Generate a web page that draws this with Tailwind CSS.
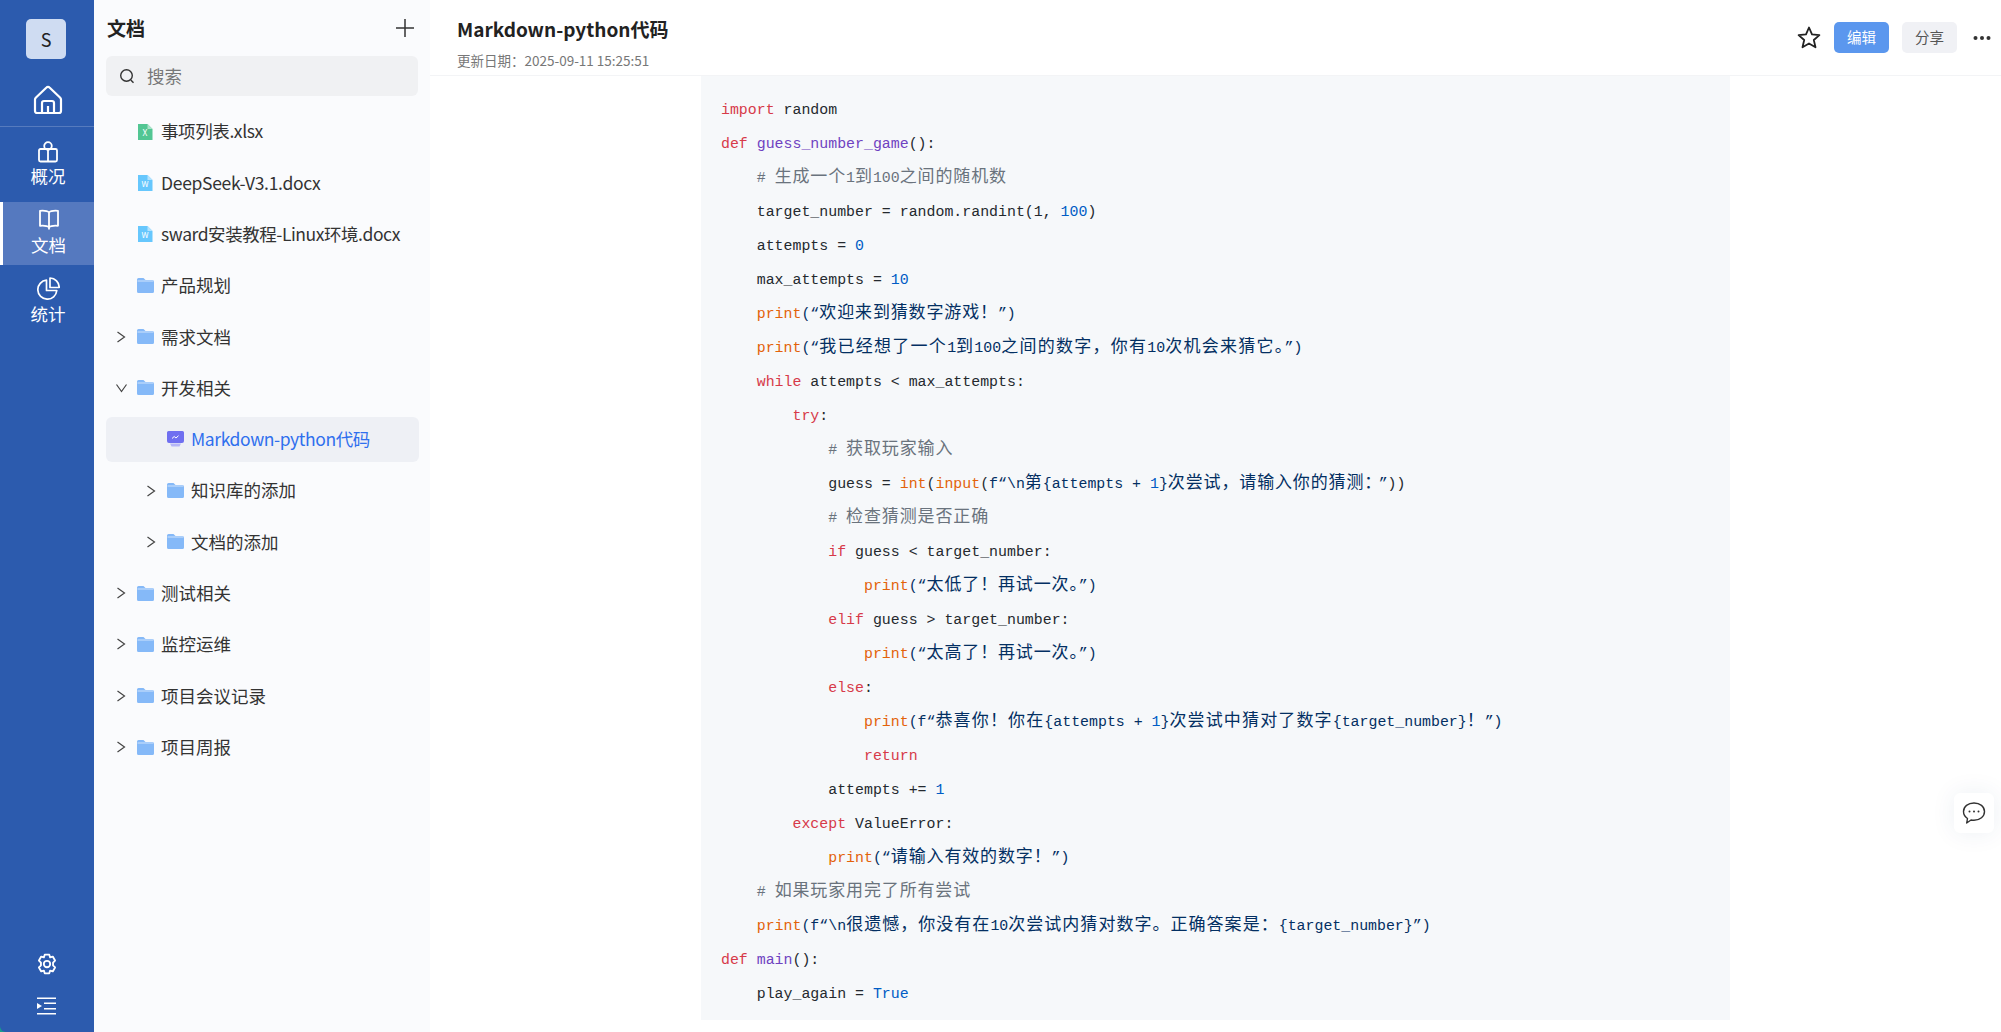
<!DOCTYPE html>
<html lang="zh-CN">
<head>
  <meta charset="UTF-8" />
  <title>Markdown-python代码</title>
  <script src="https://cdn.jsdelivr.net/npm/@tailwindcss/browser@4"></script>
</head>
<body class="h-screen overflow-hidden bg-white font-['Noto_Sans_CJK_SC','Noto_Sans',sans-serif] text-[#333]">
  <div class="flex h-[1032px] bg-[#179c8e]">
    <!-- nav -->
    <nav class="flex w-[94px] shrink-0 flex-col rounded-bl-[6px] bg-[#2c5bae] text-[17.5px] text-white">
      <div class="flex h-[127px] flex-col items-center border-b border-white/20 pt-[19px]">
        <div class="mr-[2px] flex h-10 w-10 items-center justify-center rounded-[5px] bg-[#cfdcf2] text-[18px] text-[#222]">S</div>
        <svg class="mt-[26px] ml-[2px]" width="30" height="30" viewBox="0 0 30 30" fill="none" stroke="white" stroke-width="2.2" stroke-linejoin="round"><path d="M3 12.5 13.5 2.5a2 2 0 0 1 3 0L27 12.5c.6.6 1 1.2 1 2V26a2 2 0 0 1-2 2H4a2 2 0 0 1-2-2V14.500c0-.8.400-1.400 1-2Z"/><path d="M9 28V18a2 2 0 0 1 2-2h8a2 2 0 0 1 2 2v10M15 21v7"/></svg>
      </div>
      <a class="flex h-[75px] flex-col items-center pt-[14px] pl-[2px] leading-[24px]">
        <svg width="22" height="22" viewBox="0 0 22 22" fill="none" stroke="white" stroke-width="1.800" stroke-linejoin="round"><rect x="2" y="8" width="18" height="12.500" rx="1.500"/><circle cx="11" cy="5" r="3.800"/><path d="M11 8.500v12"/></svg>
        <span class="mt-[1px]">概况</span>
      </a>
      <a class="flex h-[63px] flex-col items-center border-l-[3px] border-white bg-[#5579bf] pt-[6px] leading-[24px]">
        <svg width="22" height="22" viewBox="0 0 22 22" fill="none" stroke="white" stroke-width="1.800" stroke-linejoin="round"><path d="M11 4.500C9.500 2.800 6 2.500 2 2.800v15c4-.3 7.500 0 9 1.700 1.500-1.700 5-2 9-1.700v-15c-4-.3-7.500 0-9 1.700ZM11 4.500v17"/></svg>
        <span class="mt-[3px]">文档</span>
      </a>
      <a class="flex h-[76px] flex-col items-center pt-[12px] pl-[2px] leading-[24px]">
        <svg width="23" height="23" viewBox="0 0 23 23" fill="none" stroke="white" stroke-width="1.700" stroke-linejoin="round"><path d="M9.500 3.200a9.500 9.500 0 1 0 10.300 10.300H9.500Z"/><path d="M13 1v9.500h9.200A9.500 9.500 0 0 0 13 1Z"/></svg>
        <span class="mt-[2px]">统计</span>
      </a>
      <div class="mt-auto flex flex-col items-center pb-[17px]">
        <svg width="22" height="22" viewBox="0 0 24 24" fill="none" stroke="white" stroke-width="2" stroke-linejoin="round"><circle cx="12" cy="12" r="3.500"/><path d="M9.500 1.800h5l.9 3 2.900-.9 2.500 4.300-2.200 2.300v3l2.200 2.300-2.500 4.300-2.900-.9-.9 3h-5l-.9-3-2.900.9-2.500-4.300 2.200-2.300v-3L3.200 8.200l2.500-4.300 2.900.9Z"/></svg>
        <svg class="mt-[22px]" width="20" height="18" viewBox="0 0 20 18" fill="white"><rect y="0.500" width="19" height="1.500"/><rect x="7" y="5.500" width="12" height="1.500"/><rect x="7" y="11" width="12" height="1.500"/><rect y="16" width="19" height="1.500"/><path d="M0 6 5 9 0 12Z"/></svg>
      </div>
    </nav>

    <!-- doc tree -->
    <aside class="w-[336px] shrink-0 bg-[#fafbfd] px-3 text-[17.5px]">
      <div class="flex h-[56px] items-center justify-between pl-[1px] pr-[3px]">
        <h2 class="text-[19px] font-bold text-[#222]">文档</h2>
        <svg width="20" height="20" viewBox="0 0 20 20" stroke="#333" stroke-width="1.500"><path d="M10 1v18M1 10h18"/></svg>
      </div>
      <div class="flex h-10 items-center rounded-[6px] bg-[#f0f1f3] pl-[13px] text-[#777]">
        <svg width="16" height="16" viewBox="0 0 16 16" fill="none" stroke="#333" stroke-width="1.400"><circle cx="7.500" cy="7.500" r="5.800"/><path d="m11.800 12 2.700 2.700"/></svg>
        <span class="ml-[12px]">搜索</span>
      </div>
      <ul class="mt-[13px] flex w-[313px] flex-col gap-[6.300px] [&>li]:flex [&>li]:h-[45px] [&>li]:items-center [&>li]:rounded-[6px] [&>li]:pl-[10px]">
        <li>
          <span class="w-[21px]"></span>
          <svg class="mr-[8px]" width="16" height="16" viewBox="0 0 16 16"><path d="M1 0h9.500L15.500 5v11H1Z" fill="#52c693"/><path d="M10.500 0v5h5Z" fill="#a9e3c9"/><text x="8" y="12" font-size="8.500" fill="#fff" text-anchor="middle">X</text></svg>
          <span class="tracking-[-0.4px]">事项列表.xlsx</span>
        </li>
        <li>
          <span class="w-[21px]"></span>
          <svg class="mr-[8px]" width="16" height="16" viewBox="0 0 16 16"><path d="M1 0h9.500L15.500 5v11H1Z" fill="#66c7fd"/><path d="M10.500 0v5h5Z" fill="#b3e3fe"/><text x="8" y="12" font-size="8" fill="#fff" text-anchor="middle">W</text></svg>
          <span class="tracking-[-0.3px]">DeepSeek-V3.1.docx</span>
        </li>
        <li>
          <span class="w-[21px]"></span>
          <svg class="mr-[8px]" width="16" height="16" viewBox="0 0 16 16"><path d="M1 0h9.500L15.500 5v11H1Z" fill="#66c7fd"/><path d="M10.500 0v5h5Z" fill="#b3e3fe"/><text x="8" y="12" font-size="8" fill="#fff" text-anchor="middle">W</text></svg>
          <span class="tracking-[-0.45px]">sward安装教程-Linux环境.docx</span>
        </li>
        <li>
          <span class="w-[21px]"></span>
          <svg class="mr-[7px]" width="17" height="15" viewBox="0 0 17 15"><path d="M1.500 0H6.500L8.500 2H15.500A1.500 1.500 0 0 1 17 3.500V13.500A1.500 1.500 0 0 1 15.500 15H1.500A1.500 1.500 0 0 1 0 13.500V1.500A1.500 1.500 0 0 1 1.500 0Z" fill="#85b9f8"/><path d="M.5 2.500H16.500V3.500H.5Z" fill="#cfe3fc"/></svg>
          <span>产品规划</span>
        </li>
        <li>
          <svg class="mr-[11px]" width="10" height="12" viewBox="0 0 10 12" fill="none" stroke="#444" stroke-width="1.200"><path d="m1.500 1 7 5-7 5"/></svg>
          <svg class="mr-[7px]" width="17" height="15" viewBox="0 0 17 15"><path d="M1.500 0H6.500L8.500 2H15.500A1.500 1.500 0 0 1 17 3.500V13.500A1.500 1.500 0 0 1 15.500 15H1.500A1.500 1.500 0 0 1 0 13.500V1.500A1.500 1.500 0 0 1 1.500 0Z" fill="#85b9f8"/><path d="M.5 2.500H16.500V3.500H.5Z" fill="#cfe3fc"/></svg>
          <span>需求文档</span>
        </li>
        <li>
          <svg class="mr-[10px]" width="11" height="10" viewBox="0 0 11 10" fill="none" stroke="#444" stroke-width="1.200"><path d="m.5 1.500 5 7 5-7"/></svg>
          <svg class="mr-[7px]" width="17" height="15" viewBox="0 0 17 15"><path d="M1.500 0H6.500L8.500 2H15.500A1.500 1.500 0 0 1 17 3.500V13.500A1.500 1.500 0 0 1 15.500 15H1.500A1.500 1.500 0 0 1 0 13.500V1.500A1.500 1.500 0 0 1 1.500 0Z" fill="#85b9f8"/><path d="M.5 2.500H16.500V3.500H.5Z" fill="#cfe3fc"/></svg>
          <span>开发相关</span>
        </li>
        <li class="bg-[#eef0f5] !pl-[40px] text-[#2f6fee]">
          <span class="w-[21px]"></span>
          <svg class="mr-[7px]" width="17" height="16" viewBox="0 0 17 16"><path d="M1.500 0H15.500A1.500 1.500 0 0 1 17 1.500V10A2 2 0 0 1 15 12H2A2 2 0 0 1 0 10V1.500A1.500 1.500 0 0 1 1.500 0Z" fill="#6f6ff0"/><path d="M3 12.500H14L12.500 15.500H4.500Z" fill="#b5b6f7"/><path d="m5 7.500 2.200-2 1.800 1.500 2.500-2.300" fill="none" stroke="#fff" stroke-width="1"/></svg>
          <span class="tracking-[-0.4px]">Markdown-python代码</span>
        </li>
        <li class="!pl-[40px]">
          <svg class="mr-[11px]" width="10" height="12" viewBox="0 0 10 12" fill="none" stroke="#444" stroke-width="1.200"><path d="m1.500 1 7 5-7 5"/></svg>
          <svg class="mr-[7px]" width="17" height="15" viewBox="0 0 17 15"><path d="M1.500 0H6.500L8.500 2H15.500A1.500 1.500 0 0 1 17 3.500V13.500A1.500 1.500 0 0 1 15.500 15H1.500A1.500 1.500 0 0 1 0 13.500V1.500A1.500 1.500 0 0 1 1.500 0Z" fill="#85b9f8"/><path d="M.5 2.500H16.500V3.500H.5Z" fill="#cfe3fc"/></svg>
          <span>知识库的添加</span>
        </li>
        <li class="!pl-[40px]">
          <svg class="mr-[11px]" width="10" height="12" viewBox="0 0 10 12" fill="none" stroke="#444" stroke-width="1.200"><path d="m1.500 1 7 5-7 5"/></svg>
          <svg class="mr-[7px]" width="17" height="15" viewBox="0 0 17 15"><path d="M1.500 0H6.500L8.500 2H15.500A1.500 1.500 0 0 1 17 3.500V13.500A1.500 1.500 0 0 1 15.500 15H1.500A1.500 1.500 0 0 1 0 13.500V1.500A1.500 1.500 0 0 1 1.500 0Z" fill="#85b9f8"/><path d="M.5 2.500H16.500V3.500H.5Z" fill="#cfe3fc"/></svg>
          <span>文档的添加</span>
        </li>
        <li>
          <svg class="mr-[11px]" width="10" height="12" viewBox="0 0 10 12" fill="none" stroke="#444" stroke-width="1.200"><path d="m1.500 1 7 5-7 5"/></svg>
          <svg class="mr-[7px]" width="17" height="15" viewBox="0 0 17 15"><path d="M1.500 0H6.500L8.500 2H15.500A1.500 1.500 0 0 1 17 3.500V13.500A1.500 1.500 0 0 1 15.500 15H1.500A1.500 1.500 0 0 1 0 13.500V1.500A1.500 1.500 0 0 1 1.500 0Z" fill="#85b9f8"/><path d="M.5 2.500H16.500V3.500H.5Z" fill="#cfe3fc"/></svg>
          <span>测试相关</span>
        </li>
        <li>
          <svg class="mr-[11px]" width="10" height="12" viewBox="0 0 10 12" fill="none" stroke="#444" stroke-width="1.200"><path d="m1.500 1 7 5-7 5"/></svg>
          <svg class="mr-[7px]" width="17" height="15" viewBox="0 0 17 15"><path d="M1.500 0H6.500L8.500 2H15.500A1.500 1.500 0 0 1 17 3.500V13.500A1.500 1.500 0 0 1 15.500 15H1.500A1.500 1.500 0 0 1 0 13.500V1.500A1.500 1.500 0 0 1 1.500 0Z" fill="#85b9f8"/><path d="M.5 2.500H16.500V3.500H.5Z" fill="#cfe3fc"/></svg>
          <span>监控运维</span>
        </li>
        <li>
          <svg class="mr-[11px]" width="10" height="12" viewBox="0 0 10 12" fill="none" stroke="#444" stroke-width="1.200"><path d="m1.500 1 7 5-7 5"/></svg>
          <svg class="mr-[7px]" width="17" height="15" viewBox="0 0 17 15"><path d="M1.500 0H6.500L8.500 2H15.500A1.500 1.500 0 0 1 17 3.500V13.500A1.500 1.500 0 0 1 15.500 15H1.500A1.500 1.500 0 0 1 0 13.500V1.500A1.500 1.500 0 0 1 1.500 0Z" fill="#85b9f8"/><path d="M.5 2.500H16.500V3.500H.5Z" fill="#cfe3fc"/></svg>
          <span>项目会议记录</span>
        </li>
        <li>
          <svg class="mr-[11px]" width="10" height="12" viewBox="0 0 10 12" fill="none" stroke="#444" stroke-width="1.200"><path d="m1.500 1 7 5-7 5"/></svg>
          <svg class="mr-[7px]" width="17" height="15" viewBox="0 0 17 15"><path d="M1.500 0H6.500L8.500 2H15.500A1.500 1.500 0 0 1 17 3.500V13.500A1.500 1.500 0 0 1 15.500 15H1.500A1.500 1.500 0 0 1 0 13.500V1.500A1.500 1.500 0 0 1 1.500 0Z" fill="#85b9f8"/><path d="M.5 2.500H16.500V3.500H.5Z" fill="#cfe3fc"/></svg>
          <span>项目周报</span>
        </li>
      </ul>
    </aside>

    <!-- main -->
    <main class="relative flex min-w-0 flex-1 flex-col bg-white">
      <header class="flex h-[76px] shrink-0 items-center justify-between border-b border-[#f3f4f6] pl-[27px] pr-[10px]">
        <div class="pt-[8px]">
          <h1 class="text-[19px] leading-[28px] font-semibold text-[#222]">Markdown-python代码</h1>
          <p class="mt-[8px] text-[13.500px] leading-[18px] text-[#777]">更新日期：2025-09-11 15:25:51</p>
        </div>
        <div class="flex items-center">
          <svg width="24" height="23" viewBox="0 0 24 23" fill="none" stroke="#222" stroke-width="1.800" stroke-linejoin="round"><path d="M12 1.500 15 8.400l7.400.7-5.600 4.900 1.700 7.300L12 17.500l-6.500 3.800 1.700-7.300L1.600 9.100 9 8.400Z"/></svg>
          <button class="ml-[13px] h-[31px] w-[55px] rounded-[5px] bg-[#5b97ee] pb-[2px] text-[14.500px] text-white">编辑</button>
          <button class="ml-[13px] h-[31px] w-[55px] rounded-[5px] bg-[#f0f1f5] pb-[2px] text-[14.500px] text-[#555]">分享</button>
          <svg class="ml-[16px]" width="18" height="6" viewBox="0 0 18 6" fill="#333"><circle cx="2.500" cy="3" r="2"/><circle cx="9" cy="3" r="2"/><circle cx="15.500" cy="3" r="2"/></svg>
        </div>
      </header>

      <div class="ml-[271px] h-[944px] w-[1029px] bg-[#f6f8fa] pt-[17px] pl-[20px] font-['Liberation_Mono','Noto_Sans_CJK_SC',monospace] text-[14.900px] text-[#24292e] [&_i]:text-[17px] [&_i]:tracking-[0.860px] [&_i]:not-italic [&>div]:h-[34px] [&>div]:leading-[34px] [&>div]:whitespace-pre">
<div><span class="text-[#d73a49]">import</span> random</div>
<div><span class="text-[#d73a49]">def</span> <span class="text-[#6f42c1]">guess_number_game</span>():</div>
<div class="text-[#6a737d]">    # <i>生成一个</i>1<i>到</i>100<i>之间的随机数</i></div>
<div>    target_number = random.randint(1, <span class="text-[#005cc5]">100</span>)</div>
<div>    attempts = <span class="text-[#005cc5]">0</span></div>
<div>    max_attempts = <span class="text-[#005cc5]">10</span></div>
<div>    <span class="text-[#e36209]">print</span><span class="text-[#032f62]">(“<i>欢迎来到猜数字游戏！</i>”)</span></div>
<div>    <span class="text-[#e36209]">print</span><span class="text-[#032f62]">(“<i class="!tracking-[1.260px]">我已经想了一个</i>1<i class="!tracking-[1.260px]">到</i>100<i class="!tracking-[1.260px]">之间的数字，你有</i>10<i class="!tracking-[1.260px]">次机会来猜它。</i>”)</span></div>
<div>    <span class="text-[#d73a49]">while</span> attempts &lt; max_attempts:</div>
<div>        <span class="text-[#d73a49]">try</span>:</div>
<div class="text-[#6a737d]">            # <i>获取玩家输入</i></div>
<div>            guess = <span class="text-[#e36209]">int</span>(<span class="text-[#e36209]">input</span>(<span class="text-[#032f62]">f“\n<i>第</i>{attempts + <span class="text-[#005cc5]">1</span>}<i class="mr-[5px]">次尝试，请输入你的猜测：</i>”</span>))</div>
<div class="text-[#6a737d]">            # <i>检查猜测是否正确</i></div>
<div>            <span class="text-[#d73a49]">if</span> guess &lt; target_number:</div>
<div>                <span class="text-[#e36209]">print</span><span class="text-[#032f62]">(“<i>太低了！再试一次。</i>”)</span></div>
<div>            <span class="text-[#d73a49]">elif</span> guess &gt; target_number:</div>
<div>                <span class="text-[#e36209]">print</span><span class="text-[#032f62]">(“<i>太高了！再试一次。</i>”)</span></div>
<div>            <span class="text-[#d73a49]">else</span>:</div>
<div>                <span class="text-[#e36209]">print</span><span class="text-[#032f62]">(f“<i class="!tracking-[1.140px]">恭喜你！你在</i>{attempts + <span class="text-[#005cc5]">1</span>}<i class="!tracking-[1.140px]">次尝试中猜对了数字</i>{target_number}<i>！</i>”)</span></div>
<div>                <span class="text-[#d73a49]">return</span></div>
<div>            attempts += <span class="text-[#005cc5]">1</span></div>
<div>        <span class="text-[#d73a49]">except</span> ValueError:</div>
<div>            <span class="text-[#e36209]">print</span><span class="text-[#032f62]">(“<i>请输入有效的数字！</i>”)</span></div>
<div class="text-[#6a737d]">    # <i>如果玩家用完了所有尝试</i></div>
<div>    <span class="text-[#e36209]">print</span><span class="text-[#032f62]">(f“\n<i class="!tracking-[1.030px]">很遗憾，你没有在</i>10<i class="!tracking-[1.030px]">次尝试内猜对数字。正确答案是：</i>{target_number}”)</span></div>
<div><span class="text-[#d73a49]">def</span> <span class="text-[#6f42c1]">main</span>():</div>
<div>    play_again = <span class="text-[#005cc5]">True</span></div>
      </div>

      <button class="absolute top-[793px] right-[7px] flex h-10 w-10 items-center justify-center rounded-[6px] bg-white shadow-[0_0_24px_rgba(30,60,120,0.08)]">
        <svg width="24" height="24" viewBox="0 0 24 24" fill="none" stroke="#333" stroke-width="1.400" stroke-linejoin="round"><path d="M12 2C6 2 1.500 5.500 1.500 10.500c0 3 1.700 5.500 4 7l-.8 4.500 4.300-3c1 .2 2 .3 3 .3 6 0 10.500-3.800 10.500-8.800S18 2 12 2Z"/><circle cx="7.500" cy="10.500" r="1" fill="#333" stroke="none"/><circle cx="12" cy="10.500" r="1" fill="#333" stroke="none"/><circle cx="16.500" cy="10.500" r="1" fill="#333" stroke="none"/></svg>
      </button>
    </main>
  </div>
</body>
</html>
